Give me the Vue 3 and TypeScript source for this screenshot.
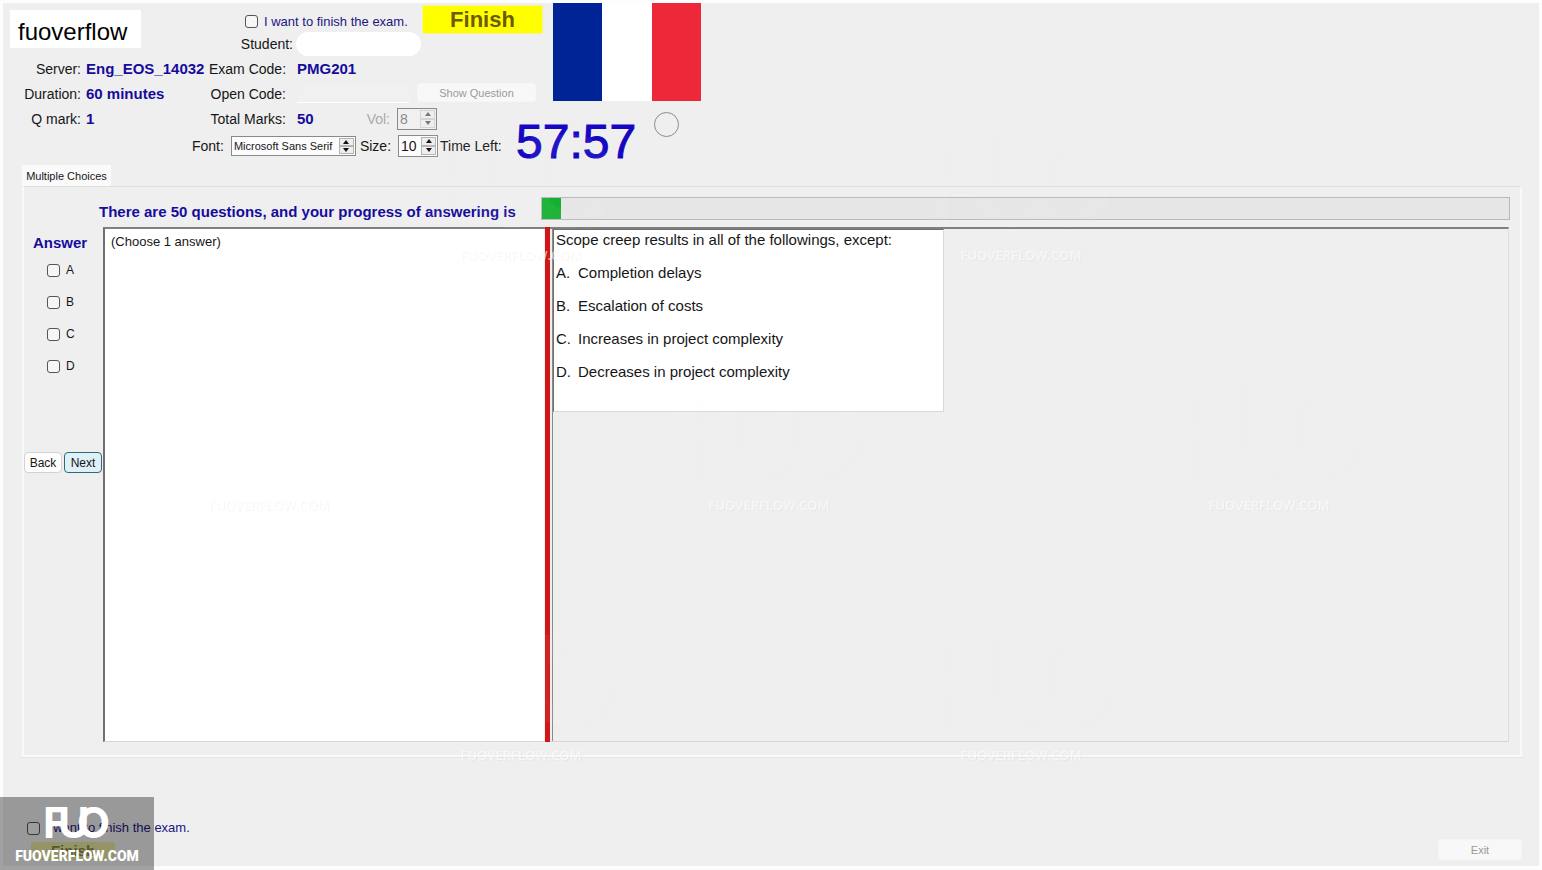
<script setup lang="ts">
import { ref } from 'vue'

const finishTop = ref(false)
const finishBottom = ref(false)
const openCode = ref('')
const volume = ref('8')
const fontName = ref('Microsoft Sans Serif')
const fontSize = ref('10')
const picked = ref<string[]>([])

const letters: string[] = ['A', 'B', 'C', 'D']
const options: { key: string; text: string }[] = [
  { key: 'A', text: 'Completion delays' },
  { key: 'B', text: 'Escalation of costs' },
  { key: 'C', text: 'Increases in project complexity' },
  { key: 'D', text: 'Decreases in project complexity' },
]
const markRows: number[] = [2, 3, 2]
</script>

<template>
  <div class="window">
    <header class="upper">
      <div class="session">
        <div class="brand">fuoverflow</div>
        <div class="field"><span class="label">Server:</span><b class="value">Eng_EOS_14032</b></div>
        <div class="field"><span class="label">Duration:</span><b class="value">60 minutes</b></div>
      </div>

      <div class="exam">
        <label class="agree"><input v-model="finishTop" type="checkbox" class="tick" />I want to finish the exam.</label>
        <div class="student"><span class="label">Student:</span><span class="redacted"></span></div>
        <div class="field"><span class="label">Exam Code:</span><b class="value">PMG201</b></div>
        <div class="field">
          <label class="label" for="open-code">Open Code:</label>
          <input id="open-code" v-model="openCode" class="open-code" type="text" />
        </div>
      </div>

      <div class="actions">
        <button class="finish" type="button">Finish</button>
        <button class="plain show" type="button" disabled>Show Question</button>
      </div>

      <div class="flag" role="img" aria-label="Flag of France"><i class="blue"></i><i class="white"></i><i class="red"></i></div>
    </header>

    <div class="lower">
      <div class="settings">
        <div class="marks">
          <span class="label q">Q mark:</span><b class="value one">1</b>
          <span class="label total">Total Marks:</span><b class="value fifty">50</b>
          <label class="label vol" for="vol">Vol:</label>
          <div class="spin off">
            <input id="vol" v-model="volume" type="text" disabled />
            <span class="steps">
              <button type="button" disabled aria-label="Volume up"><svg viewBox="0 0 8 6"><path d="M1 5h6L4 1z" /></svg></button>
              <button type="button" disabled aria-label="Volume down"><svg viewBox="0 0 8 6"><path d="M1 1h6L4 5z" /></svg></button>
            </span>
          </div>
        </div>
        <div class="type">
          <label for="font">Font:</label>
          <div class="spin wide">
            <input id="font" v-model="fontName" type="text" />
            <span class="steps">
              <button type="button" aria-label="Previous font"><svg viewBox="0 0 8 6"><path d="M1 5h6L4 1z" /></svg></button>
              <button type="button" aria-label="Next font"><svg viewBox="0 0 8 6"><path d="M1 1h6L4 5z" /></svg></button>
            </span>
          </div>
          <label class="size" for="size">Size:</label>
          <div class="spin">
            <input id="size" v-model="fontSize" type="text" />
            <span class="steps">
              <button type="button" aria-label="Size up"><svg viewBox="0 0 8 6"><path d="M1 5h6L4 1z" /></svg></button>
              <button type="button" aria-label="Size down"><svg viewBox="0 0 8 6"><path d="M1 1h6L4 5z" /></svg></button>
            </span>
          </div>
          <span class="left">Time Left:</span>
        </div>
      </div>
      <div class="clock">57:57</div>
      <input class="lamp" type="radio" aria-label="Connection" />
    </div>

    <main class="tabs">
      <button class="tab" type="button">Multiple Choices</button>
      <section class="panel">
        <div class="progress-row">
          <label for="progress">There are 50 questions, and your progress of answering is</label>
          <progress id="progress" value="2" max="100"></progress>
        </div>
        <div class="work">
          <div class="answers">
            <b class="title">Answer</b>
            <label v-for="l in letters" :key="l" class="choice">
              <input v-model="picked" type="checkbox" class="tick" :value="l" />{{ l }}
            </label>
            <div class="nav">
              <button type="button">Back</button>
              <button type="button" class="next">Next</button>
            </div>
          </div>
          <div class="panes">
            <div class="prompt">(Choose 1 answer)</div>
            <div class="splitter"></div>
            <div class="viewer">
              <div class="sheet">
                <p>Scope creep results in all of the followings, except:</p>
                <p v-for="o in options" :key="o.key"><span class="key">{{ o.key }}.</span>{{ o.text }}</p>
              </div>
            </div>
          </div>
        </div>
      </section>
    </main>

    <footer class="bottom">
      <div class="confirm">
        <label class="agree"><input v-model="finishBottom" type="checkbox" class="tick" />I want to finish the exam.</label>
        <button class="finish small" type="button">Finish</button>
      </div>
      <button class="plain exit" type="button" disabled>Exit</button>
    </footer>

    <div class="marks-layer" aria-hidden="true">
      <div v-for="(count, r) in markRows" :key="r" class="mark-row" :class="{ shifted: count === 2 }">
        <div v-for="n in count" :key="n" class="mark">
          <svg viewBox="0 0 68 34"><text x="0 15 34" y="32">FUO</text></svg>
          <span>FUOVERFLOW.COM</span>
        </div>
      </div>
    </div>

    <div class="badge">
      <svg viewBox="0 0 68 34" aria-hidden="true"><text x="0 15 34" y="32">FUO</text></svg>
      <span>FUOVERFLOW.COM</span>
    </div>
  </div>
</template>

<style>
body {
  margin: 0;
  background: #fff;
}
</style>

<style scoped>
.window {
  position: relative;
  display: flex;
  flex-direction: column;
  box-sizing: border-box;
  min-height: 100vh;
  border: 3px solid #fdfdfd;
  border-bottom-width: 4px;
  background: #efefef;
  color: #161616;
  font: 14px/20px "Liberation Sans", Arial, sans-serif;
}
button,
input {
  font: inherit;
  color: inherit;
  margin: 0;
  padding: 0;
  box-sizing: border-box;
}
.upper {
  display: flex;
  align-items: flex-start;
}
.session {
  width: 206px;
  padding-top: 7px;
}
.brand {
  width: 131px;
  height: 38px;
  margin: 0 0 8px 7px;
  box-sizing: border-box;
  padding-left: 8px;
  background: #fff;
  color: #000;
  font-size: 24px;
  line-height: 44px;
}
.field {
  display: flex;
  align-items: center;
  height: 25px;
  white-space: nowrap;
}
.label {
  text-align: right;
  white-space: nowrap;
}
.value {
  color: #150c9c;
  font-size: 15px;
}
.session .label {
  width: 78px;
  margin-right: 5px;
}
.exam {
  width: 208px;
  padding-top: 8px;
}
.exam .field .label {
  width: 77px;
  margin-right: 11px;
}
.agree {
  display: flex;
  align-items: center;
  gap: 6px;
  color: #1d1680;
  font-size: 13px;
  white-space: nowrap;
}
.exam .agree {
  height: 21px;
  margin-left: 36px;
}
.tick {
  appearance: none;
  flex: none;
  width: 13px;
  height: 13px;
  border: 1px solid #555;
  border-radius: 3px;
  background: #f6f6f6;
}
.tick:checked {
  background: #1d1680;
}
.student {
  display: flex;
  align-items: center;
  height: 24px;
}
.student .label {
  flex: none;
  width: 84px;
  margin-right: 3px;
}
.redacted {
  flex: none;
  width: 125px;
  height: 24px;
  border-radius: 12px;
  background: #fff;
}
.open-code {
  width: 112px;
  height: 19px;
  border: 0;
  border-bottom: 1px solid #fff;
  background: #f0f0f0;
}
.actions {
  width: 136px;
  padding-top: 2px;
}
.finish {
  display: block;
  width: 121px;
  height: 29px;
  margin-left: 5px;
  border: 1px solid #f5f58a;
  border-radius: 2px;
  background: #ff0;
  color: #6b5a00;
  font-size: 22px;
  font-weight: bold;
  line-height: 24px;
}
.plain {
  border: 1px solid #f6f6f6;
  border-radius: 3px;
  background: #f8f8f8;
  color: #9a9a9a;
  font-size: 11px;
  line-height: 16px;
}
.show {
  display: block;
  width: 119px;
  height: 19px;
  margin-top: 49px;
}
.flag {
  display: flex;
  width: 148px;
  height: 98px;
}
.flag i {
  flex: 1;
}
.blue {
  background: #002395;
}
.white {
  background: #fff;
}
.red {
  background: #ed2939;
}
.lower {
  display: flex;
  align-items: flex-start;
}
.settings {
  width: 513px;
}
.marks,
.type {
  display: flex;
  align-items: center;
}
.marks {
  height: 25px;
}
.type {
  height: 29px;
  padding-left: 189px;
  white-space: nowrap;
}
.q {
  width: 78px;
  margin-right: 5px;
}
.one {
  width: 50px;
}
.total {
  width: 150px;
  margin-right: 11px;
}
.fifty {
  width: 50px;
}
.vol {
  width: 43px;
  margin-right: 7px;
  color: #aaa;
}
.spin {
  display: flex;
  box-sizing: border-box;
  width: 40px;
  height: 22px;
  padding: 1px;
  border: 1px solid #8a8a8a;
  background: #fcfcfc;
}
.spin input {
  flex: 1;
  min-width: 0;
  border: 0;
  padding-left: 1px;
  background: transparent;
}
.wide {
  width: 125px;
  height: 20px;
  margin-left: 7px;
}
.wide input {
  font-size: 11px;
}
.size {
  margin: 0 7px 0 4px;
}
.left {
  margin-left: 2px;
}
.off {
  background: #f0f0f0;
  color: #8a8a8a;
}
.steps {
  display: flex;
  flex-direction: column;
  width: 15px;
}
.steps button {
  display: flex;
  flex: 1;
  align-items: center;
  justify-content: center;
  min-height: 0;
  border: 1px solid #b4b4b4;
  background: #eee;
}
.off .steps button {
  border-color: #d4d4d4;
}
.steps svg {
  width: 8px;
  height: 6px;
  fill: #111;
}
.off .steps svg {
  fill: #777;
}
.clock {
  width: 138px;
  padding-top: 12px;
  color: #1506c4;
  font-size: 48px;
  line-height: 47px;
  -webkit-text-stroke: 1px #1506c4;
}
.lamp {
  appearance: none;
  width: 25px;
  height: 25px;
  margin-top: 6px;
  border: 1px solid #8c8c8c;
  border-radius: 50%;
}
.tabs {
  display: flex;
  flex: 1;
  flex-direction: column;
  margin: 0 17px 0 19px;
}
.tab {
  align-self: flex-start;
  width: 89px;
  height: 21px;
  border: 0;
  background: #fafafa;
  font-size: 11px;
  white-space: nowrap;
}
.panel {
  display: flex;
  flex: 1;
  flex-direction: column;
  padding: 10px 10px 13px 0;
  border: 2px solid #f9f9f9;
  border-top: 1px solid #dedede;
  box-shadow: 0 1px 0 #e4e4e4;
}
.progress-row {
  display: flex;
  align-items: center;
  height: 23px;
  margin-bottom: 7px;
  padding-left: 75px;
}
.progress-row label {
  width: 442px;
  padding-top: 7px;
  color: #150c9c;
  font-size: 15px;
  font-weight: bold;
  white-space: nowrap;
}
progress {
  appearance: none;
  flex: 1;
  height: 23px;
  border: 1px solid #b9b9b9;
  box-sizing: border-box;
  background: #e6e6e6;
}
progress::-webkit-progress-bar {
  background: #e6e6e6;
}
progress::-webkit-progress-value {
  background: #14b02f;
}
.work {
  display: flex;
  flex: 1;
}
.answers {
  display: flex;
  flex-direction: column;
  width: 79px;
  padding-top: 6px;
  box-sizing: border-box;
}
.title {
  margin: 0 7px 1px 0;
  color: #150c9c;
  font-size: 15px;
  text-align: center;
}
.choice {
  display: flex;
  align-items: center;
  gap: 6px;
  height: 32px;
  padding-left: 23px;
  font-size: 12px;
}
.nav {
  display: flex;
  gap: 2px;
  margin-top: 70px;
}
.nav button {
  width: 38px;
  height: 21px;
  border: 1px solid #d2d2d2;
  border-radius: 4px;
  background: #fdfdfd;
  font-size: 12px;
  line-height: 18px;
}
.nav .next {
  border-color: #2c6a80;
  background: #dff0f7;
}
.panes {
  display: flex;
  flex: 1;
  margin-right: 1px;
  border-top: 2px solid #808080;
  border-left: 2px solid #707070;
  border-bottom: 1px solid #d6d6d6;
  border-right: 1px solid #dcdcdc;
}
.prompt {
  width: 433px;
  padding: 3px 0 0 6px;
  background: #fff;
  font-size: 13px;
}
.splitter {
  width: 5px;
  margin: -2px 2px -1px 1px;
  background: #d01616;
}
.viewer {
  flex: 1;
  border-left: 1px solid #8a8a8a;
}
.sheet {
  box-sizing: border-box;
  width: 391px;
  height: 183px;
  padding-left: 2px;
  border: 1px solid #d8d8d8;
  border-top: 1px solid #707070;
  border-left: 1px solid #707070;
  background: #fff;
  font-size: 15px;
  line-height: 19px;
}
.sheet p {
  margin: 0 0 14px;
}
.key {
  display: inline-block;
  width: 22px;
}
.bottom {
  display: flex;
  align-items: flex-start;
  justify-content: space-between;
  height: 109px;
  padding: 0 17px 0 24px;
  box-sizing: border-box;
}
.confirm {
  padding-top: 61px;
}
.small {
  width: 84px;
  height: 18px;
  margin: 4px 0 0 4px;
  border: 0;
  background: #e8e8a0;
  color: #8a8650;
  font-size: 15px;
  line-height: 14px;
}
.exit {
  width: 84px;
  height: 21px;
  margin-top: 82px;
}
.marks-layer {
  position: absolute;
  inset: 0;
  display: flex;
  flex-direction: column;
  overflow: hidden;
  pointer-events: none;
}
.mark-row {
  display: flex;
  flex: none;
  align-items: flex-end;
  gap: 300px;
  height: 250px;
  padding-left: 166px;
}
.mark-row:first-child {
  height: 262px;
}
.mark-row.shifted {
  padding-left: 418px;
}
.mark {
  flex: none;
  width: 200px;
  color: rgba(255, 255, 255, 0.6);
  font: 600 13px/20px "Open Sans", sans-serif;
  text-align: center;
  text-shadow: 1px 1px 0 rgba(0, 0, 0, 0.05);
}
.mark svg {
  display: block;
  width: 200px;
  height: 100px;
  margin-bottom: 12px;
  opacity: 0.05;
  fill: #fff;
}
svg text {
  font: 700 43px Inter, sans-serif;
}
.mark svg,
.badge svg {
  overflow: visible;
}
.badge {
  position: absolute;
  bottom: -4px;
  left: -3px;
  display: flex;
  flex-direction: column;
  align-items: center;
  box-sizing: border-box;
  width: 154px;
  height: 73px;
  padding-top: 9px;
  background: rgba(0, 0, 0, 0.36);
  color: #fff;
  font: 900 14px/20px Roboto, "Liberation Sans", sans-serif;
}
.badge svg {
  width: 68px;
  height: 34px;
  margin-bottom: 6px;
  fill: #fff;
}
</style>
